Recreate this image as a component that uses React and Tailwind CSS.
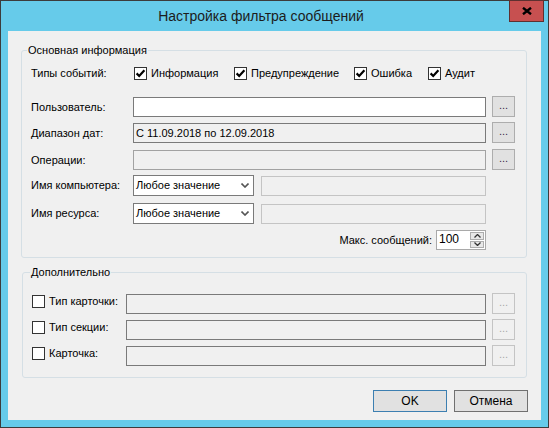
import React from 'react';

function Check({ checked }) {
  return (
    <span className="w-[13px] h-[13px] shrink-0 border border-[#333] bg-white flex items-center justify-center">
      {checked && (
        <svg width="11" height="11" viewBox="0 0 11 11">
          <path d="M1.6 5.4 L4.2 8 L9.4 2.2" fill="none" stroke="#000" strokeWidth="2.2" />
        </svg>
      )}
    </span>
  );
}

function Dots({ disabled }) {
  return (
    <button
      className={`w-[23px] h-[21px] shrink-0 ml-[6px] border flex items-end justify-center pb-[5px] text-[11px] leading-none ${
        disabled ? 'border-[#c4c4c4] bg-[#f0f0f0] text-[#a8a8a8]' : 'border-[#adadad] bg-[#e1e1e1] text-[#3a2a4a]'
      }`}
    >
      ...
    </button>
  );
}

function Combo() {
  return (
    <div className="w-[121px] h-[21px] shrink-0 border border-[#7a7a7a] bg-white flex items-center justify-between pl-[2px] pr-[4px]">
      <span>Любое значение</span>
      <svg width="8" height="5" viewBox="0 0 8 5">
        <path d="M0.5 0.5 L4 4 L7.5 0.5" fill="none" stroke="#555" strokeWidth="1.6" />
      </svg>
    </div>
  );
}

export default function App() {
  const types = [
    { label: 'Информация', w: 'w-[100px]' },
    { label: 'Предупреждение', w: 'w-[120px]' },
    { label: 'Ошибка', w: 'w-[74px]' },
    { label: 'Аудит', w: 'w-[60px]' },
  ];
  const extra = ['Тип карточки:', 'Тип секции:', 'Карточка:'];

  return (
    <div className="relative w-[549px] h-[428px] bg-[#66cbea] border border-[#3c3c3c] flex flex-col font-['Liberation_Sans',Arial,sans-serif] text-[11px] text-black">
      {/* Caption */}
      <div className="h-[30px] shrink-0 flex items-center justify-center pr-[27px] text-[14px] text-[#1c1c1c]">
        Настройка фильтра сообщений
      </div>
      <button className="absolute -top-px right-[4px] w-[35px] h-[22px] bg-[#c75050] border border-[#5e3030] flex items-center justify-center">
        <svg width="10" height="8" viewBox="0 0 10 8">
          <path d="M1 0.8 L9 7.2 M9 0.8 L1 7.2" stroke="#000" strokeWidth="2.4" />
        </svg>
      </button>

      {/* Client area */}
      <div className="mx-[7px] h-[389px] bg-[#f0f0f0] flex flex-col">
        {/* Основная информация */}
        <div className="relative ml-[13px] mt-[19px] w-[506px] h-[208px] shrink-0 border border-[#d5dfe5] rounded-[3px] pl-[9px] flex flex-col">
          <span className="absolute -top-[7px] left-[5px] px-[1px] bg-[#f0f0f0] leading-[13px]">Основная информация</span>

          <div className="flex items-center h-[13px] mt-[16px]">
            <span className="w-[103px] shrink-0">Типы событий:</span>
            {types.map((t) => (
              <div key={t.label} className={`${t.w} shrink-0 flex items-center gap-[4px]`}>
                <Check checked />
                <span>{t.label}</span>
              </div>
            ))}
          </div>

          <div className="flex items-end h-[21px] mt-[16px]">
            <span className="w-[102px] h-[20px] shrink-0 flex items-center">Пользователь:</span>
            <div className="w-[353px] h-[20px] shrink-0 border border-[#7a7a7a] bg-white" />
            <Dots />
          </div>

          <div className="flex items-end h-[21px] mt-[5px]">
            <span className="w-[102px] h-[20px] shrink-0 flex items-center">Диапазон дат:</span>
            <div className="w-[353px] h-[20px] shrink-0 border border-[#7a7a7a] bg-[#f0f0f0] flex items-center pl-[2px]">
              С 11.09.2018 по 12.09.2018
            </div>
            <Dots />
          </div>

          <div className="flex items-end h-[21px] mt-[6px]">
            <span className="w-[102px] h-[20px] shrink-0 flex items-center">Операции:</span>
            <div className="w-[353px] h-[20px] shrink-0 border border-[#a2a2a2] bg-[#f0f0f0]" />
            <Dots />
          </div>

          <div className="flex items-end h-[21px] mt-[5px]">
            <span className="w-[102px] h-[21px] shrink-0 flex items-center">Имя компьютера:</span>
            <Combo />
            <div className="w-[225px] h-[20px] ml-[7px] shrink-0 border border-[#c4c4c4] bg-[#f0f0f0]" />
          </div>

          <div className="flex items-end h-[21px] mt-[7px]">
            <span className="w-[102px] h-[21px] shrink-0 flex items-center">Имя ресурса:</span>
            <Combo />
            <div className="w-[225px] h-[20px] ml-[7px] shrink-0 border border-[#c4c4c4] bg-[#f0f0f0]" />
          </div>

          <div className="w-[455px] flex items-center justify-end h-[20px] mt-[6px]">
            <span className="mr-[4px]">Макс. сообщений:</span>
            <div className="w-[50px] h-[20px] border border-[#a9a9a9] bg-white flex">
              <span className="flex-1 pl-[2px] text-[12px] leading-[16px]">100</span>
              <div className="w-[16px] flex flex-col gap-[1px] p-[1px]">
                <div className="flex-1 border border-[#adadad] bg-[#e8e8e8] flex items-center justify-center">
                  <svg width="7" height="4" viewBox="0 0 7 4">
                    <path d="M0.5 3.5 L3.5 0.5 L6.5 3.5" fill="none" stroke="#333" strokeWidth="1.3" />
                  </svg>
                </div>
                <div className="flex-1 border border-[#adadad] bg-[#e8e8e8] flex items-center justify-center">
                  <svg width="7" height="4" viewBox="0 0 7 4">
                    <path d="M0.5 0.5 L3.5 3.5 L6.5 0.5" fill="none" stroke="#333" strokeWidth="1.3" />
                  </svg>
                </div>
              </div>
            </div>
          </div>
        </div>

        {/* Дополнительно */}
        <div className="relative ml-[14px] mt-[14px] w-[505px] h-[106px] shrink-0 border border-[#d5dfe5] rounded-[3px] pl-[9px] pt-[20px] flex flex-col gap-[5px]">
          <span className="absolute -top-[7px] left-[7px] px-[1px] bg-[#f0f0f0] leading-[13px]">Дополнительно</span>
          {extra.map((label) => (
            <div key={label} className="flex items-start h-[21px]">
              <div className="w-[94px] h-[13px] mt-[2px] shrink-0 flex items-center gap-[4px]">
                <Check />
                <span>{label}</span>
              </div>
              <div className="w-[360px] h-[20px] mt-[1px] shrink-0 border border-[#7a7a7a] bg-[#f0f0f0]" />
              <Dots disabled />
            </div>
          ))}
        </div>

        {/* Buttons */}
        <div className="flex justify-end gap-[7px] pr-[13px] mt-[12px]">
          <button className="w-[74px] h-[22px] border border-[#3c7fb1] bg-[#e1e1e1] text-[12px]">OK</button>
          <button className="w-[74px] h-[22px] border border-[#707070] bg-[#e1e1e1] text-[12px]">Отмена</button>
        </div>
      </div>
    </div>
  );
}
